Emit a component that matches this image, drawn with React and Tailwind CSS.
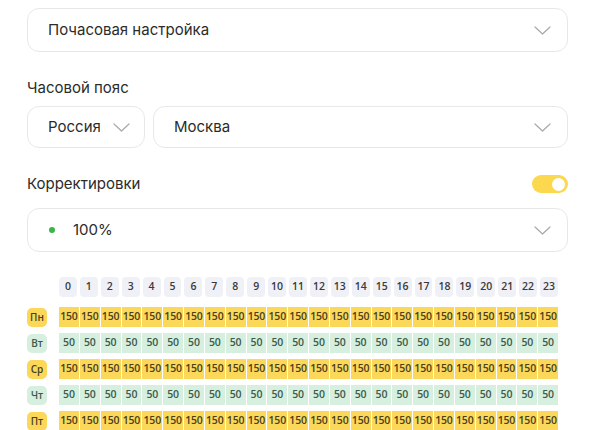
import React from "react";

const Chevron = () => (
  <svg width="17" height="9" viewBox="0 0 17 9" fill="none">
    <path d="M1 1 L8.5 8 L16 1" stroke="#a8a8a8" strokeWidth="1.2" strokeLinecap="round" strokeLinejoin="round" />
  </svg>
);

const hours = Array.from({ length: 24 }, (_, i) => i);
const days = [
  { d: "Пн", v: "150", y: true },
  { d: "Вт", v: "50", y: false },
  { d: "Ср", v: "150", y: true },
  { d: "Чт", v: "50", y: false },
  { d: "Пт", v: "150", y: true },
];

export default function App() {
  return (
    <div
      className="w-[600px] h-[430px] overflow-hidden bg-white pl-[27px] pr-[32px] pt-[8px] text-[#2b2b2b]"
      style={{ fontFamily: "Inter, 'Noto Sans', sans-serif" }}
    >
      <div className="h-[44px] rounded-[12px] border border-[#e8e8e8] flex items-center justify-between pl-[20px] pr-[16px]">
        <span className="text-[15px]">Почасовая настройка</span>
        <Chevron />
      </div>

      <div className="mt-[26px] h-[20px] flex items-center text-[15px]">Часовой пояс</div>

      <div className="mt-[8px] flex gap-[8px]">
        <div className="w-[118px] h-[42px] rounded-[12px] border border-[#e8e8e8] flex items-center pl-[20px] gap-[12px]">
          <span className="text-[15px]">Россия</span>
          <Chevron />
        </div>
        <div className="flex-1 h-[42px] rounded-[12px] border border-[#e8e8e8] flex items-center justify-between pl-[20px] pr-[16px]">
          <span className="text-[15px]">Москва</span>
          <Chevron />
        </div>
      </div>

      <div className="mt-[26px] h-[20px] flex items-center justify-between">
        <span className="text-[15px]">Корректировки</span>
        <div className="w-[36px] h-[18px] rounded-full bg-[#fbd84d] flex items-center justify-end pr-[3px]">
          <div className="w-[13px] h-[13px] rounded-full bg-white" />
        </div>
      </div>

      <div className="mt-[14px] h-[44px] rounded-[12px] border border-[#e8e8e8] flex items-center justify-between pl-[21px] pr-[16px]">
        <div className="flex items-center gap-[18px]">
          <div className="w-[6px] h-[6px] rounded-full bg-[#3bb54a]" />
          <span className="text-[15px]">100%</span>
        </div>
        <Chevron />
      </div>

      <div style={{ fontFamily: "'Open Sans', sans-serif" }}>
        <div className="mt-[25px] flex">
          <div className="w-[32px]" />
          <div className="w-[499px] grid grid-cols-24 gap-[3px]">
            {hours.map((h) => (
              <div
                key={h}
                className="h-[20px] rounded-[4px] bg-[#f0f1f6] flex items-center justify-center text-[10.5px] font-semibold text-[#3a3a3a]"
              >
                {h}
              </div>
            ))}
          </div>
        </div>

        <div className="mt-[10px] flex flex-col gap-[6px]">
          {days.map((row) => (
            <div key={row.d} className="flex items-center">
              <div className="w-[32px]">
                <div
                  className={
                    "w-[20px] h-[19px] rounded-[5px] flex items-center justify-center text-[10px] font-semibold " +
                    (row.y ? "bg-[#fcd85a] text-[#4a3f1c]" : "bg-[#d6efdf] text-[#3d5a4c]")
                  }
                >
                  {row.d}
                </div>
              </div>
              <div className="w-[499px] grid grid-cols-24 gap-[1px]">
                {hours.map((h) => (
                  <div
                    key={h}
                    className={
                      "h-[20px] flex items-center justify-center text-[10.5px] font-semibold tracking-[-0.2px] " +
                      (row.y ? "bg-[#fcd85a] text-[#4a3f1c]" : "bg-[#d6efdf] text-[#3d5a4c]")
                    }
                  >
                    {row.v}
                  </div>
                ))}
              </div>
            </div>
          ))}
        </div>
      </div>
    </div>
  );
}
